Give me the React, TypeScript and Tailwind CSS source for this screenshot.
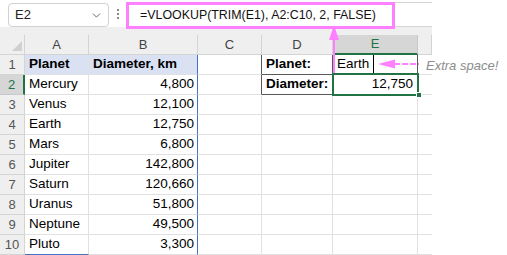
import { ChevronDown } from "lucide-react";

const cols = [
  { key: "A", w: "w-[64px]" },
  { key: "B", w: "w-[109px]" },
  { key: "C", w: "w-[64px]" },
  { key: "D", w: "w-[71px]" },
  { key: "E", w: "w-[85px]" },
  { key: "F", w: "w-[14px]" },
];

const planets: [string, string][] = [
  ["Mercury", "4,800"],
  ["Venus", "12,100"],
  ["Earth", "12,750"],
  ["Mars", "6,800"],
  ["Jupiter", "142,800"],
  ["Saturn", "120,660"],
  ["Uranus", "51,800"],
  ["Neptune", "49,500"],
  ["Pluto", "3,300"],
];

export default function App() {
  const rows = Array.from({ length: 10 }, (_, i) => i + 1);

  return (
    <div className="relative w-[507px] h-[255px] overflow-hidden bg-white font-['Liberation_Sans',Arial,sans-serif] text-black">
      {/* Name box + formula bar */}
      <div className="flex w-[432px] h-[27px] items-stretch">
        <div className="ml-[8px] mt-[3px] w-[101px] h-[24px] border border-[#d1d1d1] rounded-[4px] flex items-center justify-between pl-[6px] pr-[5px] text-[13px] text-[#222]">
          <span>E2</span>
          <ChevronDown size={13} strokeWidth={1.6} className="text-[#555]" />
        </div>
        <div className="w-[17px] flex flex-col items-center justify-center gap-[2px]">
          <span className="w-[2px] h-[2px] bg-[#888]" />
          <span className="w-[2px] h-[2px] bg-[#888]" />
          <span className="w-[2px] h-[2px] bg-[#888]" />
        </div>
        <div className="flex-1 flex border-y border-[#d4d4d4] mt-[2px]">
          <div className="w-[269px] -mt-[1px] h-[27px] border-[3px] border-[#ff80ff] flex items-center pl-[11px] text-[12.4px] text-[#111] whitespace-nowrap">
            =VLOOKUP(TRIM(E1), A2:C10, 2, FALSE)
          </div>
        </div>
      </div>

      {/* Gray strip */}
      <div className="w-[432px] h-[8px] bg-[#efefef]" />

      {/* Column headers */}
      <div className="flex w-[432px] h-[20px] bg-[#efefef] text-[13px] text-[#444]">
        <div className="w-[25px] border-r border-b border-[#d4d4d4] flex items-end justify-end pr-[2px] pb-[3px]">
          <svg width="10" height="10" viewBox="0 0 10 10">
            <path d="M10 0 L10 10 L0 10 Z" fill="#d0d0d0" />
          </svg>
        </div>
        {cols.map((c) =>
          c.key === "E" ? (
            <div
              key={c.key}
              className={`${c.w} bg-[#d6d6d6] border-b-2 border-b-[#217346] border-r border-r-[#c8c8c8] flex items-center justify-center text-[#217346]`}
            >
              E
            </div>
          ) : (
            <div
              key={c.key}
              className={`${c.w} border-r border-b border-[#d4d4d4] flex items-center justify-center`}
            >
              {c.key === "F" ? "" : c.key}
            </div>
          )
        )}
      </div>

      {/* Grid rows */}
      {rows.map((r) => {
        const planet = r >= 2 ? planets[r - 2] : null;
        return (
          <div key={r} className="flex w-[432px] h-[20px] text-[13.5px]">
            {r === 2 ? (
              <div className="w-[25px] bg-[#d6d6d6] border-b border-[#c8c8c8] border-r-2 border-r-[#217346] flex items-center justify-center text-[13px] text-[#217346]">
                2
              </div>
            ) : (
              <div className="w-[25px] bg-[#efefef] border-r border-b border-[#d4d4d4] flex items-center justify-center text-[13px] text-[#555]">
                {r}
              </div>
            )}

            {/* A */}
            <div
              className={`w-[64px] border-r border-[#e1e1e1] border-b flex items-center pl-[4px] ${
                r === 1 ? "bg-[#d9e1f2] font-bold" : ""
              } ${r === 10 ? "border-b-[#4472c4]" : ""}`}
            >
              {r === 1 ? "Planet" : planet?.[0]}
            </div>

            {/* B */}
            <div
              className={`w-[109px] border-r border-r-[#4472c4] border-b border-b-[#e1e1e1] flex items-center ${
                r === 1 ? "bg-[#d9e1f2] font-bold pl-[4px]" : "justify-end pr-[3px]"
              } ${r === 10 ? "border-b-[#4472c4]" : ""}`}
            >
              {r === 1 ? "Diameter, km" : planet?.[1]}
            </div>

            {/* C */}
            <div
              className={`w-[64px] border-r border-b border-[#e1e1e1] ${
                r <= 2 ? "border-r-[#595959]" : ""
              }`}
            />

            {/* D */}
            <div
              className={`w-[71px] border-r border-b border-[#e1e1e1] flex items-center pl-[4px] font-bold ${
                r <= 2 ? "border-r-[#595959] border-b-[#595959]" : ""
              }`}
            >
              {r === 1 ? "Planet:" : r === 2 ? "Diameter:" : ""}
            </div>

            {/* E */}
            <div
              className={`w-[85px] border-r border-b border-[#e1e1e1] flex items-center ${
                r === 1 ? "border-r-[#595959] border-b-[#595959] pl-[4px]" : ""
              } ${r === 2 ? "justify-end pr-[4px]" : ""}`}
            >
              {r === 1 ? "Earth" : r === 2 ? "12,750" : ""}
            </div>

            {/* F */}
            <div className="w-[14px] border-b border-[#e1e1e1]" />
          </div>
        );
      })}

      {/* Selected cell E2 */}
      <div className="absolute left-[332px] top-[73px] w-[87px] h-[23px] border-2 border-[#217346]" />
      <div className="absolute left-[416px] top-[92px] w-[6px] h-[6px] bg-[#217346] border border-white" />

      {/* Cursor after the trailing space in E1 */}
      <div className="absolute left-[373px] top-[55px] w-px h-[18px] bg-black" />

      {/* Pink vertical arrow from formula bar to E1 */}
      <svg className="absolute left-[326px] top-[24px]" width="16" height="50" viewBox="0 0 16 50">
        <path d="M8 1 L13 16 L3 16 Z" fill="#ff80ff" />
        <rect x="7" y="14" width="2" height="35" fill="#ff80ff" />
      </svg>

      {/* Pink dashed arrow pointing at the space */}
      <svg className="absolute left-[377px] top-[58px]" width="44" height="12" viewBox="0 0 44 12">
        <path d="M1 6 L18 1.5 L18 10.5 Z" fill="#ff80ff" />
        <line x1="17" y1="6" x2="42" y2="6" stroke="#ff80ff" strokeWidth="2" strokeDasharray="6 2" />
      </svg>

      <div className="absolute left-[426px] top-[56px] text-[13px] italic text-[#8c8c8c] whitespace-nowrap">
        Extra space!
      </div>
    </div>
  );
}
